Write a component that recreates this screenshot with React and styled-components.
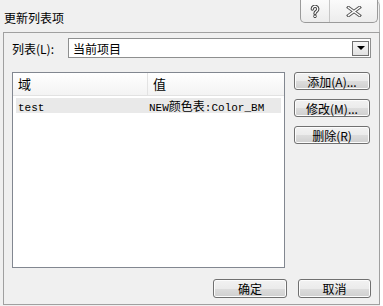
import React from 'react'
import styled, { createGlobalStyle } from 'styled-components'

const GlobalStyle = createGlobalStyle`
	html, body {
		margin: 0;
		padding: 0;
		background: #fff;
	}
	body {
		font-family: "Noto Sans CJK SC", "Liberation Sans", sans-serif;
		font-size: 12px;
		color: #000;
	}
`

const Window = styled.div`
	width: 380px;
	height: 306px;
	background: #f0f0f0;
	display: flex;
	flex-direction: column;
	box-sizing: border-box;
`

const TitleBar = styled.div`
	height: 32px;
	display: flex;
	justify-content: space-between;
	align-items: flex-start;
	border-right: 1px solid #b4b4b4;
	border-top-right-radius: 6px;
	box-sizing: border-box;
`

const Title = styled.div`
	padding: 9px 0 0 4px;
	font-size: 12px;
	line-height: 17px;
	color: #000;
`

const CaptionGroup = styled.div`
	display: flex;
	height: 23px;
	margin-right: 1px;
	border: 1px solid #9a9a9a;
	border-top: none;
	border-radius: 0 0 5px 5px;
	background: linear-gradient(#fbfbfb, #ececec);
	box-sizing: border-box;
	overflow: hidden;
`

const CaptionButton = styled.div`
	width: ${p => p.w}px;
	display: flex;
	align-items: center;
	justify-content: center;
	border-left: ${p => (p.first ? 'none' : '1px solid #c6c6c6')};
`

const Client = styled.div`
	flex: 1;
	margin: 0 0 1px 3px;
	border: 1px solid #a0a0a0;
	padding: 5px 8px 6px 8px;
	display: flex;
	flex-direction: column;
	box-sizing: border-box;
`

const ComboRow = styled.div`
	display: flex;
	align-items: center;
	height: 20px;
`

const Label = styled.div`
	width: 56px;
	font-size: 12px;
	white-space: nowrap;
`

const Combo = styled.div`
	flex: 1;
	height: 20px;
	border: 1px solid #8e8f8f;
	background: #fff;
	display: flex;
	align-items: center;
	justify-content: space-between;
	padding-left: 4px;
	box-sizing: border-box;
`

const DropButton = styled.div`
	width: 17px;
	height: 15px;
	margin-right: 1px;
	border: 1px solid #6f6f6f;
	background: linear-gradient(#f6f6f6, #e2e2e2);
	display: flex;
	align-items: center;
	justify-content: center;
	box-sizing: border-box;
`

const Arrow = styled.div`
	width: 0;
	height: 0;
	border-left: 4px solid transparent;
	border-right: 4px solid transparent;
	border-top: 4px solid #000;
`

const Main = styled.div`
	flex: 1;
	display: flex;
	gap: 9px;
	margin-top: 14px;
`

const ListBox = styled.div`
	width: 273px;
	border: 1px solid #828790;
	background: #fff;
	box-sizing: border-box;
`

const HeaderRow = styled.div`
	display: flex;
	height: 22px;
	background: linear-gradient(#ffffff, #f3f3f3);
	border-bottom: 1px solid #e2e2e2;
`

const HeaderCell = styled.div`
	width: ${p => (p.w ? `${p.w}px` : 'auto')};
	flex: ${p => (p.w ? 'none' : 1)};
	padding-left: 5px;
	font-size: 13px;
	line-height: 22px;
	box-sizing: border-box;
	border-right: ${p => (p.w ? '1px solid #e3e3e3' : 'none')};
`

const DataRow = styled.div`
	display: flex;
	height: 15px;
	margin: 2px 3px 0 3px;
	background: #e9e9e9;
`

const Cell = styled.div`
	width: ${p => (p.w ? `${p.w}px` : 'auto')};
	flex: ${p => (p.w ? 'none' : 1)};
	padding-left: 2px;
	font-size: 12px;
	line-height: 15px;
	white-space: nowrap;
	box-sizing: border-box;
`

const Asc = styled.span`
	font-family: "Liberation Mono", monospace;
	font-size: 11px;
`

const SideButtons = styled.div`
	width: 76px;
	display: flex;
	flex-direction: column;
	gap: 9px;
`

const Button = styled.div`
	width: ${p => p.w || 76}px;
	height: ${p => p.h || 18}px;
	border: 1px solid #707070;
	border-radius: 3px;
	background: linear-gradient(#f2f2f2 0%, #ebebeb 50%, #dddddd 51%, #cfcfcf 100%);
	box-shadow: inset 0 0 0 1px #fcfcfc;
	display: flex;
	align-items: center;
	justify-content: center;
	font-size: 12px;
	box-sizing: border-box;
	white-space: nowrap;
`

const Footer = styled.div`
	display: flex;
	justify-content: flex-end;
	gap: 11px;
	margin-top: 11px;
`

const HelpIcon = () => (
	<svg width="12" height="13" viewBox="0 0 12 13">
		<g fill="none" strokeLinecap="round">
			<path d="M3.3 4 A2.7 2.7 0 1 1 7.8 6 Q6 7 6 8.6" stroke="#4a4a4a" strokeWidth="3.4" />
			<path d="M3.3 4 A2.7 2.7 0 1 1 7.8 6 Q6 7 6 8.6" stroke="#fff" strokeWidth="1.3" />
		</g>
		<circle cx="6" cy="11.3" r="1.4" fill="#fff" stroke="#4a4a4a" strokeWidth="1" />
	</svg>
)

const CloseIcon = () => (
	<svg width="16" height="11" viewBox="0 0 16 11">
		<g fill="none" strokeLinecap="square">
			<path d="M2.5 1.5 L13.5 9.5 M13.5 1.5 L2.5 9.5" stroke="#5a5a5a" strokeWidth="3.4" />
			<path d="M2.5 1.5 L13.5 9.5 M13.5 1.5 L2.5 9.5" stroke="#fff" strokeWidth="1.3" />
		</g>
	</svg>
)

const App = () => (
	<Window>
		<GlobalStyle />
		<TitleBar>
			<Title>更新列表项</Title>
			<CaptionGroup>
				<CaptionButton w={28} first>
					<HelpIcon />
				</CaptionButton>
				<CaptionButton w={47}>
					<CloseIcon />
				</CaptionButton>
			</CaptionGroup>
		</TitleBar>
		<Client>
			<ComboRow>
				<Label>列表(L):</Label>
				<Combo>
					<span>当前项目</span>
					<DropButton>
						<Arrow />
					</DropButton>
				</Combo>
			</ComboRow>
			<Main>
				<ListBox>
					<HeaderRow>
						<HeaderCell w={135}>域</HeaderCell>
						<HeaderCell>值</HeaderCell>
					</HeaderRow>
					<DataRow>
						<Cell w={131}><Asc>test</Asc></Cell>
						<Cell>
							<Asc>NEW</Asc>颜色表<Asc>:Color_BM</Asc>
						</Cell>
					</DataRow>
				</ListBox>
				<SideButtons>
					<Button>添加(A)...</Button>
					<Button>修改(M)...</Button>
					<Button>删除(R)</Button>
				</SideButtons>
			</Main>
			<Footer>
				<Button w={74} h={19}>确定</Button>
				<Button w={73} h={19}>取消</Button>
			</Footer>
		</Client>
	</Window>
)

export default App
